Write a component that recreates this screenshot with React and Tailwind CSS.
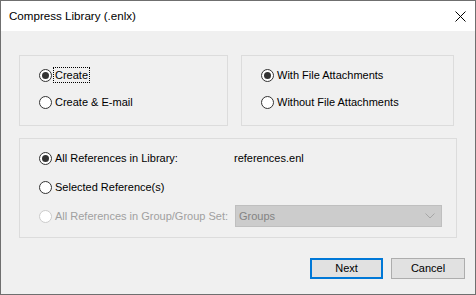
import React from "react"

const Radio = ({ label, checked, disabled, focused }) => (
    <div className="flex items-center h-[16px]">
        <span className={`w-[13px] h-[13px] rounded-full border flex items-center justify-center shrink-0
        ${disabled ? 'border-[#cccccc] bg-[#ffffff]' : 'border-[#333333] bg-white'}`}>
            {checked && <span className="w-[7px] h-[7px] rounded-full bg-[#333333]"></span>}
        </span>
        <span className={`ml-[1px] px-[1px] leading-[14px] border border-dotted whitespace-nowrap
        ${focused ? 'border-black' : 'border-transparent'}
        ${disabled ? 'text-[#a0a0a0]' : 'text-black'}`}>
            {label}
        </span>
    </div>
)

const App = () => {
    return (
        <div className="w-[476px] h-[295px] border border-[#6f6f6f] bg-[#f0f0f0] flex flex-col text-[11px] font-['Liberation_Sans',sans-serif] text-black">
            {/* title bar */}
            <div className="h-[30px] bg-white flex items-center justify-between pl-[8px] pr-[9px] shrink-0">
                <span className="text-[11.6px]">Compress Library (.enlx)</span>
                <svg width="11" height="11" viewBox="0 0 11 11" className="text-black">
                    <path d="M0.5 0.5 L10.5 10.5 M10.5 0.5 L0.5 10.5" stroke="currentColor" strokeWidth="1" fill="none" />
                </svg>
            </div>

            <div className="pl-[18px] pt-[24px] flex flex-col">
                <div className="flex gap-[13px]">
                    <div className="w-[209px] h-[71px] border border-[#dcdcdc] pl-[19px] pt-[11px] flex flex-col gap-[11px]">
                        <Radio label="Create" checked focused />
                        <Radio label="Create & E-mail" />
                    </div>
                    <div className="w-[213px] h-[71px] border border-[#dcdcdc] pl-[19px] pt-[11px] flex flex-col gap-[11px]">
                        <Radio label="With File Attachments" checked />
                        <Radio label="Without File Attachments" />
                    </div>
                </div>

                <div className="mt-[12px] w-[438px] h-[100px] border border-[#dcdcdc] pl-[19px] pt-[11px] flex flex-col">
                    <div className="flex items-center h-[16px]">
                        <div className="w-[195px] shrink-0"><Radio label="All References in Library:" checked /></div>
                        <span>references.enl</span>
                    </div>
                    <div className="mt-[13px] flex items-center h-[16px]">
                        <Radio label="Selected Reference(s)" />
                    </div>
                    <div className="mt-[10px] flex items-center h-[22px]">
                        <div className="w-[196px] shrink-0"><Radio label="All References in Group/Group Set:" disabled /></div>
                        <div className="w-[207px] h-[22px] bg-[#cccccc] border border-[#bfbfbf] flex items-center justify-between pl-[3px] pr-[6px] text-[#838383]">
                            <span>Groups</span>
                            <svg width="10" height="6" viewBox="0 0 10 6">
                                <path d="M0.5 0.5 L5 5 L9.5 0.5" stroke="#a6a6a6" strokeWidth="1" fill="none" />
                            </svg>
                        </div>
                    </div>
                </div>

                <div className="mt-[20px] flex justify-end gap-[8px] pr-[10px]">
                    <button className="w-[73px] h-[21px] bg-[#e1e1e1] border-2 border-[#0078d7] flex items-center justify-center">Next</button>
                    <button className="w-[74px] h-[21px] bg-[#e1e1e1] border border-[#adadad] flex items-center justify-center">Cancel</button>
                </div>
            </div>
        </div>
    )
}

export default App
